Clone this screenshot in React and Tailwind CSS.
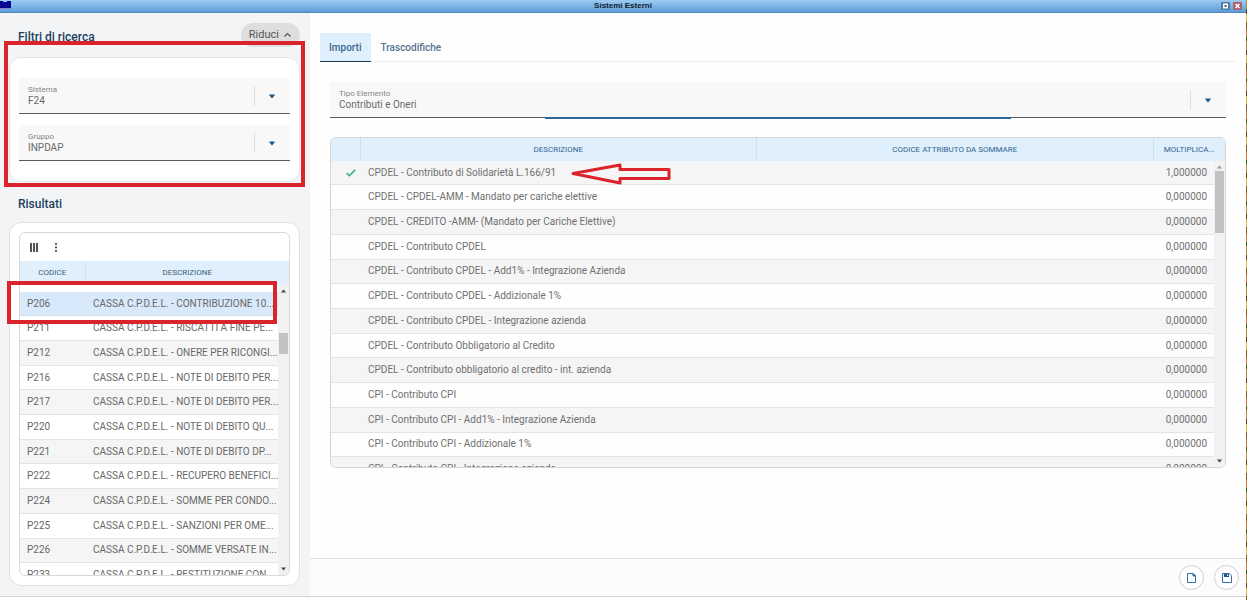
import { useState } from "react";

const risultati = [
  { codice: "P206", descrizione: "CASSA C.P.D.E.L. - CONTRIBUZIONE 10..." },
  { codice: "P211", descrizione: "CASSA C.P.D.E.L. - RISCATTI A FINE PE..." },
  { codice: "P212", descrizione: "CASSA C.P.D.E.L. - ONERE PER RICONGI..." },
  { codice: "P216", descrizione: "CASSA C.P.D.E.L. - NOTE DI DEBITO PER..." },
  { codice: "P217", descrizione: "CASSA C.P.D.E.L. - NOTE DI DEBITO PER..." },
  { codice: "P220", descrizione: "CASSA C.P.D.E.L. - NOTE DI DEBITO QU..." },
  { codice: "P221", descrizione: "CASSA C.P.D.E.L. - NOTE DI DEBITO DP..." },
  { codice: "P222", descrizione: "CASSA C.P.D.E.L. - RECUPERO BENEFICI..." },
  { codice: "P224", descrizione: "CASSA C.P.D.E.L. - SOMME PER CONDO..." },
  { codice: "P225", descrizione: "CASSA C.P.D.E.L. - SANZIONI PER OME..." },
  { codice: "P226", descrizione: "CASSA C.P.D.E.L. - SOMME VERSATE IN..." },
  { codice: "P233", descrizione: "CASSA C.P.D.E.L. - RESTITUZIONE CON..." },
];

const importi = [
  { descrizione: "CPDEL - Contributo di Solidarietà L.166/91", valore: "1,000000", attivo: true },
  { descrizione: "CPDEL - CPDEL-AMM - Mandato per cariche elettive", valore: "0,000000" },
  { descrizione: "CPDEL - CREDITO -AMM- (Mandato per Cariche Elettive)", valore: "0,000000" },
  { descrizione: "CPDEL - Contributo CPDEL", valore: "0,000000" },
  { descrizione: "CPDEL - Contributo CPDEL - Add1% - Integrazione Azienda", valore: "0,000000" },
  { descrizione: "CPDEL - Contributo CPDEL - Addizionale 1%", valore: "0,000000" },
  { descrizione: "CPDEL - Contributo CPDEL - Integrazione azienda", valore: "0,000000" },
  { descrizione: "CPDEL - Contributo Obbligatorio al Credito", valore: "0,000000" },
  { descrizione: "CPDEL - Contributo obbligatorio al credito - int. azienda", valore: "0,000000" },
  { descrizione: "CPI - Contributo CPI", valore: "0,000000" },
  { descrizione: "CPI - Contributo CPI - Add1% - Integrazione Azienda", valore: "0,000000" },
  { descrizione: "CPI - Contributo CPI - Addizionale 1%", valore: "0,000000" },
  { descrizione: "CPI - Contributo CPI - Integrazione azienda", valore: "0,000000" },
];

const SelectField = ({ id, label, value }) => {
  return (
    <div className="relative flex h-9 flex-col border-b border-[#5c5c5c] bg-[#f8f8f8]">
      <label htmlFor={id} className="px-[9px] pt-[6px] text-[8px] leading-[11px] text-[#858585]">
        {label}
      </label>
      <select
        id={id}
        defaultValue={value}
        className="h-3 w-full appearance-none bg-transparent px-[9px] text-[10px] leading-3 text-[#6a6a6a] outline-none"
      >
        <option>{value}</option>
      </select>
      <div className="pointer-events-none absolute top-2 right-0 flex h-5 w-9 items-center justify-center border-l border-[#dedede] pr-px">
        <svg width="6" height="5" viewBox="0 0 6 5">
          <path d="M.5 .5h5v1L3 4.500L.5 1.500z" fill="#1d5688" />
        </svg>
      </div>
    </div>
  );
};

// thumb: classi di posizione e altezza del cursore
const ScrollBar = ({ thumb, topColor }) => {
  return (
    <div className="absolute top-0 right-0 bottom-0 w-[11px] bg-[#f1f1f1]">
      <svg className="absolute top-1 left-[3px]" width="6" height="4" viewBox="0 0 6 4">
        <path d="M0 3.500h5L2.500 .5z" fill={topColor} />
      </svg>
      <div className={thumb} />
      <svg className="absolute bottom-1 left-[3px]" width="6" height="4" viewBox="0 0 6 4">
        <path d="M0 .5h5L2.500 3.500z" fill="#444" />
      </svg>
    </div>
  );
};

const TitleBar = () => {
  return (
    <header className="relative flex h-[13px] shrink-0 items-center justify-center border-b border-[#5287b8] bg-linear-to-b from-[#9dcbf3] to-[#5e9dd8]">
      <svg className="absolute top-0 left-0" width="11" height="10" viewBox="0 0 11 10">
        <path d="M0 1h3v1h4V1h4v7H0z" fill="#06068f" />
        <path d="M0 8h10v1H0z" fill="#8a83c8" />
      </svg>
      <h1 className="font-['Liberation_Sans'] text-[8px] leading-3 font-bold text-[#10202f]">Sistemi Esterni</h1>
      <div className="absolute top-[2px] right-1 flex gap-[3px]">
        <button type="button" aria-label="Ingrandisci" className="h-2 w-[9px]">
          <svg width="9" height="8" viewBox="0 0 9 8">
            <rect width="9" height="8" rx="1" fill="#4e7ba3" />
            <rect x="2" y="1.500" width="5" height="5" fill="#fff" />
            <rect x="3.500" y="3" width="2" height="2" fill="#3c5a78" />
          </svg>
        </button>
        <button type="button" aria-label="Chiudi" className="h-2 w-[9px]">
          <svg width="9" height="8" viewBox="0 0 9 8">
            <rect width="9" height="8" rx="1" fill="#a9656f" />
            <path d="M2.500 2l4 4M6.500 2l-4 4" stroke="#fff" strokeWidth="1.500" />
          </svg>
        </button>
      </div>
    </header>
  );
};

const Filtri = () => {
  return (
    <section>
      <div className="flex h-6 items-center justify-between">
        <h2 className="pt-1 pl-[9px] text-[12px] leading-5 font-medium text-[#1d425f]">Filtri di ricerca</h2>
        <button type="button" className="flex h-6 items-center gap-1 rounded-full bg-[#dededf] px-2 text-[11px] leading-4 text-[#555]">
          Riduci
          <svg width="9" height="6" viewBox="0 0 9 6" fill="none" stroke="#555" strokeWidth="1.200">
            <path d="M1.500 4.500l3-3 3 3" />
          </svg>
        </button>
      </div>
      <div className="relative mt-[10px]">
        <div className="flex flex-col gap-[11px] rounded-xl border border-[#e6e7e9] bg-white px-[9px] py-5">
          <SelectField id="sistema" label="Sistema" value="F24" />
          <SelectField id="gruppo" label="Gruppo" value="INPDAP" />
        </div>
        <div className="pointer-events-none absolute -inset-x-[5px] -top-4 -bottom-[5px] border-4 border-[#db232c]" />
      </div>
    </section>
  );
};

const Risultati = () => {
  const [selezionato, setSelezionato] = useState("P206");

  return (
    <section className="flex min-h-0 flex-1 flex-col">
      <h2 className="mt-3 mb-2 pl-[9px] text-[12px] leading-5 font-medium text-[#1d425f]">Risultati</h2>
      <div className="flex min-h-0 flex-1 flex-col rounded-xl border border-[#e0e1e3] bg-white p-[9px]">
        <div className="relative flex min-h-0 flex-1 flex-col">
          <div className="flex min-h-0 flex-1 flex-col overflow-hidden rounded-md border border-[#d6d8da]">
            <div className="flex h-7 shrink-0 items-center gap-4 px-[10px]">
              <button type="button" aria-label="Colonne">
                <svg width="8" height="9" viewBox="0 0 8 9" fill="#5d5058">
                  <path d="M0 0h2v9H0zM3 0h2v9H3zM6 0h2v9H6z" />
                </svg>
              </button>
              <button type="button" aria-label="Altro">
                <svg width="4" height="9" viewBox="0 0 4 9" fill="#333">
                  <circle cx="2" cy="1" r="1" />
                  <circle cx="2" cy="4.500" r="1" />
                  <circle cx="2" cy="8" r="1" />
                </svg>
              </button>
            </div>
            <div className="relative min-h-0 flex-1 overflow-hidden">
              <table className="h-[327px] w-full table-fixed">
                <colgroup>
                  <col className="w-[65px]" />
                  <col />
                  <col className="w-[11px]" />
                </colgroup>
                <thead>
                  <tr className="h-6 bg-[#e0effc] text-[8px] leading-4 text-[#3c6076]">
                    <th className="border-r border-[#d3e1ec] p-0 font-normal">CODICE</th>
                    <th colSpan={2} className="p-0 font-normal">DESCRIZIONE</th>
                  </tr>
                </thead>
                <tbody className="text-[10px] leading-4 text-[#686868]">
                  <tr className="h-[7px]">
                    <td colSpan={3} className="p-0"></td>
                  </tr>
                  {risultati.map((item) => (
                    <tr
                      key={item.codice}
                      onClick={() => setSelezionato(item.codice)}
                      className={
                        item.codice === selezionato
                          ? "border-b border-[#d3dbe4] bg-[#d8e9fc]"
                          : "border-b border-[#e4e4e4] even:bg-[#f5f5f5] nth-[even]:bg-[#f5f5f5]"
                      }
                    >
                      <td className="p-0 pl-[7px]">{item.codice}</td>
                      <td className="p-0 pl-2 whitespace-nowrap">{item.descrizione}</td>
                      <td className="p-0"></td>
                    </tr>
                  ))}
                </tbody>
              </table>
              <div className="absolute top-6 right-0 bottom-0 w-[11px]">
                <ScrollBar topColor="#444" thumb="absolute top-[48px] left-px h-[21px] w-[9px] bg-[#c1c1c1]" />
              </div>
            </div>
          </div>
          <div className="pointer-events-none absolute top-[49px] right-[13px] -left-3 h-[43px] border-4 border-[#db232c]" />
        </div>
      </div>
    </section>
  );
};

const TabellaImporti = () => {
  return (
    <div className="relative mt-[19px] h-[331px] overflow-hidden rounded-md border border-[#d2d6da]">
      <table className="h-[344px] w-full table-fixed">
        <colgroup>
          <col className="w-[29px]" />
          <col />
          <col />
          <col className="w-[61px]" />
          <col className="w-[11px]" />
        </colgroup>
        <thead>
          <tr className="h-[23px] bg-[#e0effc] text-[8px] leading-4 text-[#2f6593]">
            <th className="border-r border-[#cfdfec] p-0"></th>
            <th className="border-r border-[#cfdfec] p-0 font-normal">DESCRIZIONE</th>
            <th className="border-r border-[#cfdfec] p-0 font-normal">CODICE ATTRIBUTO DA SOMMARE</th>
            <th colSpan={2} className="p-0 font-normal">MOLTIPLICA...</th>
          </tr>
        </thead>
        <tbody className="text-[10px] leading-4 text-[#707070]">
          {importi.map((item) => (
            <tr key={item.descrizione} className="border-b border-[#e4e4e4] odd:bg-[#f5f5f5]">
              <td className="p-0">
                {item.attivo && (
                  <svg className="ml-[15px]" width="10" height="8" viewBox="0 0 10 8" fill="none" stroke="#2bb06e" strokeWidth="1.600">
                    <path d="M.6 4l2.700 2.700L9.300 .8" />
                  </svg>
                )}
              </td>
              <td className="p-0 pl-2 whitespace-nowrap">{item.descrizione}</td>
              <td className="p-0"></td>
              <td className="p-0 pr-[7px] text-right">{item.valore}</td>
              <td className="p-0"></td>
            </tr>
          ))}
        </tbody>
      </table>
      <div className="absolute top-[23px] right-0 bottom-0 w-[11px]">
        <ScrollBar topColor="#999" thumb="absolute top-[10px] left-px h-[62px] w-[9px] bg-[#c1c1c1]" />
      </div>
      {/* freccia sulla riga attiva */}
      <svg className="absolute top-[25px] left-[239px]" width="102" height="22" viewBox="0 0 102 22" fill="none" stroke="#db232c" strokeWidth="3">
        <path d="M3 10.500L50 2v4.500h49v9H50V20z" strokeLinejoin="round" />
      </svg>
    </div>
  );
};

const App = () => {
  return (
    <div className="flex h-screen font-[Roboto,sans-serif]">
      <div className="flex min-w-0 flex-1 flex-col bg-white">
        <TitleBar />
        <div className="flex min-h-0 flex-1 border-b border-[#d5d6d8]">
          <aside className="flex w-[310px] shrink-0 flex-col bg-[#f3f4f6] pt-[10px] pr-[10px] pb-[10px] pl-[9px]">
            <Filtri />
            <Risultati />
          </aside>

          <main className="flex min-w-0 flex-1 flex-col bg-[#fefefe]">
            <div className="flex-1 px-[10px] pt-5">
              <nav className="flex h-[29px] border-b border-[#eeeeee]">
                <button type="button" className="h-[29px] border-b border-[#173a57] bg-[#e0effc] px-[9px] pt-px text-[10px] leading-4 font-medium text-[#3a6990]">
                  Importi
                </button>
                <button type="button" className="h-[29px] px-[10px] text-[10px] leading-4 font-medium text-[#56748f]">
                  Trascodifiche
                </button>
              </nav>
              <div className="px-[10px] pt-5">
                <div className="relative">
                  <SelectField id="tipo" label="Tipo Elemento" value="Contributi e Oneri" />
                  <div className="absolute -bottom-px left-[24%] h-[2px] w-[52%] bg-[#2d6797]" />
                </div>
                <TabellaImporti />
              </div>
            </div>
            <footer className="flex h-[38px] shrink-0 items-center justify-end gap-[10px] border-t border-[#dcdddf] bg-[#fcfcfc] pr-[7px]">
              <button type="button" aria-label="Nuovo" className="flex h-[25px] w-[25px] items-center justify-center rounded-full border border-[#d3ccd0] bg-white">
                <svg width="9" height="10" viewBox="0 0 9 10" fill="none" stroke="#2f6ea3">
                  <path d="M.5 .5h5.500l2.500 2.500v6.500h-8z" />
                  <path d="M6 .5v2.500h2.500z" fill="#1d5688" />
                </svg>
              </button>
              <button type="button" aria-label="Salva" className="flex h-[25px] w-[25px] items-center justify-center rounded-full border border-[#d3ccd0] bg-white">
                <svg width="10" height="10" viewBox="0 0 10 10" fill="none" stroke="#2f6ea3">
                  <path d="M.5 .5h7l2 2v7h-9z" />
                  <path d="M2 1h5v3H2z" fill="#1d5688" stroke="none" />
                  <path d="M5 1.500h1v1.500H5z" fill="#fff" stroke="none" />
                </svg>
              </button>
            </footer>
          </main>
        </div>
        <div className="h-[3px] shrink-0 bg-[#fdfdfd]" />
      </div>
      {/* bordo del desktop dietro la finestra */}
      <div className="w-px shrink-0 bg-[repeating-linear-gradient(180deg,#b98c2d_0_9px,#5a4418_9px_14px,#e0b23a_14px_22px,#8a5a20_22px_29px,#d9782a_29px_37px,#3d5c22_37px_41px)]" />
    </div>
  );
};

export default App;
